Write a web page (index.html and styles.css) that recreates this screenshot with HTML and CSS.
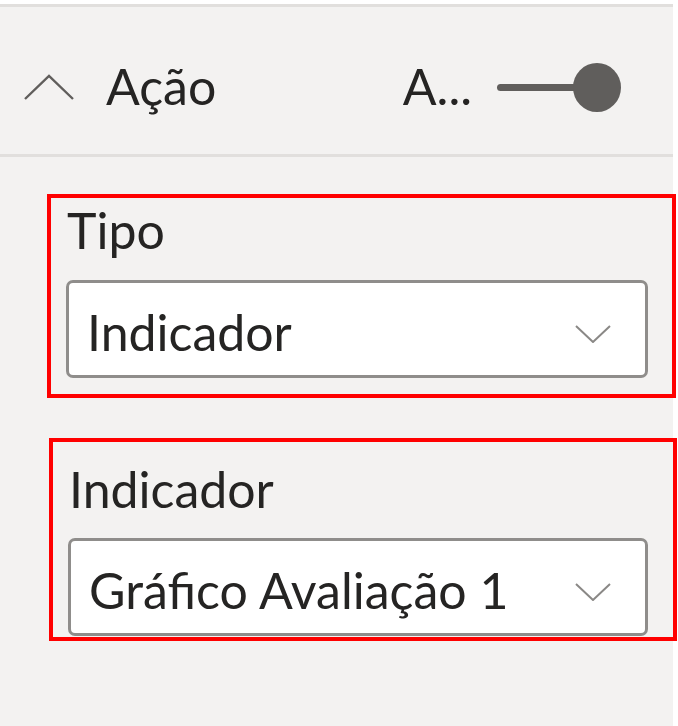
FILE: index.html
```html
<!DOCTYPE html>
<html lang="pt">
<head>
<meta charset="utf-8">
<title>Ação</title>
<link rel="stylesheet" href="styles.css">
</head>
<body>
<div class="pane">
  <div class="rule rule-top"></div>
  <div class="header">
    <svg class="chev-up" width="52" height="28" viewBox="0 0 52 28" aria-hidden="true">
      <polyline points="2,26 26,3 50,26" fill="none" stroke="#605e5c" stroke-width="2.4"/>
    </svg>
    <span class="title">Ação</span>
    <span class="spacer"></span>
    <span class="state">A...</span>
    <span class="toggle">
      <span class="track"></span>
      <span class="knob"></span>
    </span>
  </div>
  <div class="rule"></div>

  <div class="group group-one">
    <div class="label">Tipo</div>
    <div class="dropdown">
      <span class="value">Indicador</span>
      <svg class="chev-down" width="36" height="18" viewBox="0 0 36 18" aria-hidden="true">
        <polyline points="1,1 18,17 35,1" fill="none" stroke="#8a8886" stroke-width="2"/>
      </svg>
    </div>
  </div>

  <div class="group group-two">
    <div class="label">Indicador</div>
    <div class="dropdown">
      <span class="value">Gráfico Avaliação 1</span>
      <svg class="chev-down" width="36" height="18" viewBox="0 0 36 18" aria-hidden="true">
        <polyline points="1,1 18,17 35,1" fill="none" stroke="#8a8886" stroke-width="2"/>
      </svg>
    </div>
  </div>
</div>
</body>
</html>
```

FILE: styles.css
```css
html, body {
  margin: 0;
  padding: 0;
  background: #ffffff;
}

.pane {
  width: 673px;
  height: 726px;
  background: #f3f2f1;
  font-family: Lato, "Open Sans", sans-serif;
  font-size: 50px;
  line-height: 60px;
  color: #252423;
  overflow: visible;
}

.rule {
  height: 3px;
  background: #e1dfdd;
}

.rule-top {
  margin-top: 4px;
}

.header {
  height: 147px;
  box-sizing: border-box;
  padding: 10px 52px 0 23px;
  display: flex;
  align-items: center;
}

.chev-up {
  display: block;
  margin-top: 2px;
}

.title {
  margin-left: 31px;
}

.spacer {
  flex: 1;
}

.state {
  margin-right: 25px;
}

.toggle {
  display: flex;
  align-items: center;
  margin-top: 4px;
}

.track {
  width: 84px;
  height: 7px;
  border-radius: 4px;
  background: #605e5c;
  margin-right: -8px;
}

.knob {
  width: 48px;
  height: 49px;
  border-radius: 50%;
  background: #605e5c;
}

.group {
  border: 4px solid #ff0000;
  box-sizing: border-box;
  height: 204px;
  padding-left: 15px;
}

.group-one {
  margin: 37px 0 0 47px;
  width: 629px;
  padding-top: 2px;
}

.group-two {
  margin: 40px 0 0 49px;
  width: 628px;
  height: 203px;
  padding-top: 17px;
}

.label {
  padding-left: 1px;
}

.group-one .dropdown {
  margin-top: 20px;
}

.group-two .dropdown {
  margin-top: 19px;
  width: 580px;
}

.dropdown {
  width: 582px;
  height: 98px;
  box-sizing: border-box;
  border: 3px solid #8f8d8b;
  border-radius: 7px;
  background: #ffffff;
  display: flex;
  align-items: center;
  padding: 5px 34px 0 18px;
}

.value {
  flex: 1;
  white-space: nowrap;
}

.chev-down {
  display: block;
  margin-top: 4px;
}
```
